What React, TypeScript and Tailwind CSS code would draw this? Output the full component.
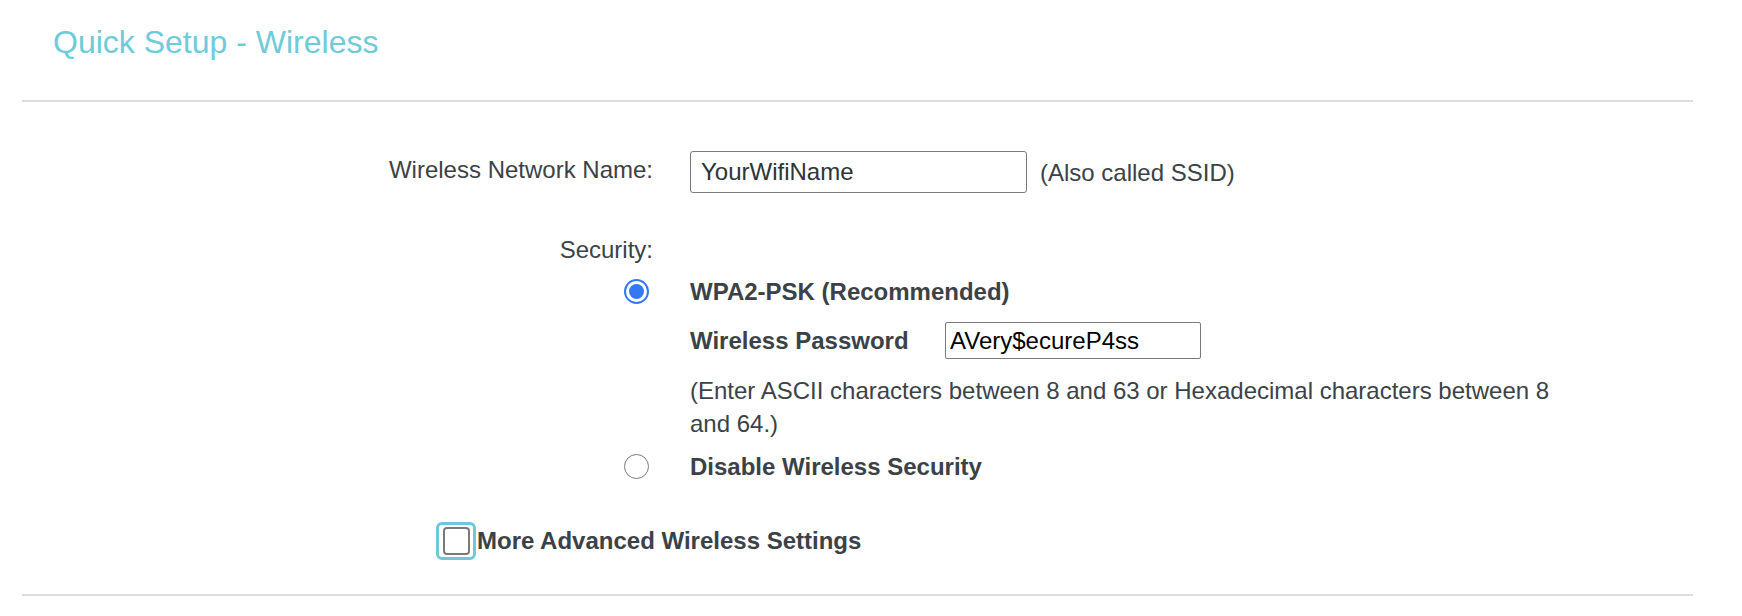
import React from 'react';

const font = { fontFamily: '"Liberation Sans", Arial, Helvetica, sans-serif' };

export default function App() {
  const [security, setSecurity] = React.useState<'wpa2' | 'none'>('wpa2');
  const [ssid, setSsid] = React.useState('YourWifiName');
  const [password, setPassword] = React.useState('AVery$ecureP4ss');

  return (
    <div className="min-h-screen bg-white text-[#3b4247]" style={font}>
      <div className="pl-[22px] pr-[49px]">
        <h1 className="pl-[31px] pt-[22px] pb-[38px] text-[32px] leading-[40px] text-[#6ecbd9] font-normal">
          Quick Setup - Wireless
        </h1>
        <div className="h-[2px] bg-[#dcdcdc]" />

        <div className="grid grid-cols-[631px_1fr] gap-x-[37px] text-[24px] leading-[33px] pt-[49px]">
          <div className="text-right pt-[2px]">Wireless Network Name:</div>
          <div className="flex items-center">
            <input
              value={ssid}
              onChange={(e) => setSsid(e.target.value)}
              className="w-[337px] h-[42px] px-[10px] border-[1.5px] border-[#7a7a7a] rounded-[3px] text-[24px] text-[#2e3439] outline-none"
            />
            <span className="ml-[13px]">(Also called SSID)</span>
          </div>

          <div className="text-right mt-[40px]">Security:</div>
          <div />

          <div className="flex justify-end items-center mt-[9px] pr-[4px]">
            <button
              onClick={() => setSecurity('wpa2')}
              className={
                security === 'wpa2'
                  ? 'w-[25px] h-[25px] rounded-full border-[2.5px] border-[#3478f6] p-[3px] bg-white'
                  : 'w-[25px] h-[25px] rounded-full border-[1.5px] border-[#7a7a7a] bg-white'
              }
            >
              {security === 'wpa2' && <span className="block w-full h-full rounded-full bg-[#3478f6]" />}
            </button>
          </div>
          <div className="mt-[9px] font-bold">WPA2-PSK (Recommended)</div>

          <div />
          <div className="flex items-center mt-[14px] font-bold">
            <span className="w-[255px]">Wireless Password</span>
            <input
              value={password}
              onChange={(e) => setPassword(e.target.value)}
              className="w-[256px] h-[37px] px-[4px] border-[1.5px] border-[#7a7a7a] rounded-[2px] text-[24px] font-normal text-black outline-none"
            />
          </div>

          <div />
          <div className="mt-[15px] max-w-[870px]">
            (Enter ASCII characters between 8 and 63 or Hexadecimal characters between 8 and 64.)
          </div>

          <div className="flex justify-end items-center mt-[10px] pr-[4px]">
            <button
              onClick={() => setSecurity('none')}
              className={
                security === 'none'
                  ? 'w-[25px] h-[25px] rounded-full border-[2.5px] border-[#3478f6] p-[3px] bg-white'
                  : 'w-[25px] h-[25px] rounded-full border-[1.5px] border-[#7a7a7a] bg-white'
              }
            >
              {security === 'none' && <span className="block w-full h-full rounded-full bg-[#3478f6]" />}
            </button>
          </div>
          <div className="mt-[10px] font-bold">Disable Wireless Security</div>
        </div>

        <label className="flex items-center pl-[414px] mt-[39px] text-[24px] font-bold cursor-pointer">
          <span className="w-[40px] h-[38px] rounded-[6px] border-[3px] border-[#6cc9d6] flex items-center justify-center">
            <input type="checkbox" className="appearance-none w-[27px] h-[28px] rounded-[4px] border-2 border-[#7a7a7a] bg-white checked:bg-[#3478f6]" />
          </span>
          <span className="ml-[1px]">More Advanced Wireless Settings</span>
        </label>

        <div className="h-[2px] bg-[#dcdcdc] mt-[34px]" />
      </div>
    </div>
  );
}
